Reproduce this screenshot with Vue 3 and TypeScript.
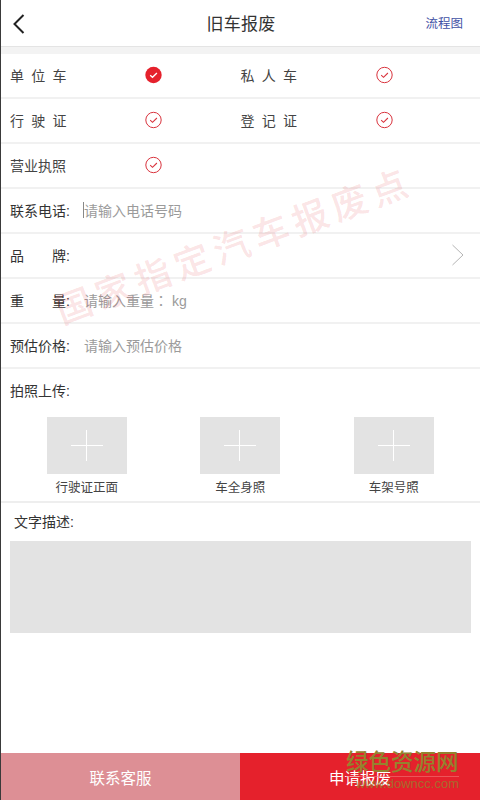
<template>
  <div class="page">
    <header class="top-bar">
      <svg class="back" width="14" height="22" viewBox="0 0 14 22">
        <path d="M11.5 2 L2.5 11 L11.5 20" fill="none" stroke="#222" stroke-width="2" />
      </svg>
      <h1 class="title">旧车报废</h1>
      <span class="flow">流程图</span>
    </header>
    <div class="band"></div>

    <div v-for="(row, i) in checkRows" :key="i" class="row check-row">
      <div v-for="item in row" :key="item.label" class="check-cell">
        <span class="check-label" :class="{ tight: item.label.length > 3 }">{{ item.label }}</span>
        <svg width="18" height="18" viewBox="0 0 18 18">
          <template v-if="item.on">
            <circle cx="8.5" cy="9" r="8.2" fill="#e5212c" />
            <path d="M5.2 9.2 L7.5 11.3 L11.9 7" fill="none" stroke="#fff" stroke-width="1.3" />
          </template>
          <template v-else>
            <circle cx="8.5" cy="9" r="7.7" fill="none" stroke="#d9343e" stroke-width="1" />
            <path d="M5.2 9.2 L7.5 11.3 L11.9 7" fill="none" stroke="#d9343e" stroke-width="1.1" />
          </template>
        </svg>
      </div>
    </div>

    <div class="row field">
      <span class="field-label">联系电话:</span>
      <span class="caret"></span>
      <span class="hint">请输入电话号码</span>
    </div>
    <div class="row field">
      <span class="field-label spread"><i>品</i><i>牌:</i></span>
      <svg class="arrow" width="14" height="26" viewBox="0 0 14 26">
        <path d="M1.5 3 L12 13 L1.5 23" fill="none" stroke="#b5b5b5" stroke-width="1" />
      </svg>
    </div>
    <div class="row field">
      <span class="field-label spread"><i>重</i><i>量:</i></span>
      <span class="hint">请输入重量<span class="hint-colon">：</span> kg</span>
    </div>
    <div class="row field">
      <span class="field-label">预估价格:</span>
      <span class="hint">请输入预估价格</span>
    </div>

    <section class="upload">
      <div class="section-label">拍照上传:</div>
      <div class="photos">
        <div v-for="photo in photos" :key="photo" class="photo">
          <div class="photo-box">
            <span class="plus-h"></span>
            <span class="plus-v"></span>
          </div>
          <span class="photo-name">{{ photo }}</span>
        </div>
      </div>
    </section>

    <section class="describe">
      <div class="section-label desc-label">文字描述:</div>
      <div class="desc-box"></div>
    </section>

    <footer class="actions">
      <button class="btn service">联系客服</button>
      <button class="btn apply">申请报废</button>
    </footer>

    <div class="stamp">国家指定汽车报废点</div>
    <div class="site-mark">
      <div class="site-name">绿色资源网</div>
      <div class="site-url">www.downcc.com</div>
    </div>
  </div>
</template>

<script setup lang="ts">
interface CheckItem {
  label: string;
  on: boolean;
}

const checkRows: CheckItem[][] = [
  [
    { label: "单位车", on: true },
    { label: "私人车", on: false },
  ],
  [
    { label: "行驶证", on: false },
    { label: "登记证", on: false },
  ],
  [{ label: "营业执照", on: false }],
];

const photos = ["行驶证正面", "车全身照", "车架号照"];
</script>

<style>
body {
  margin: 0;
  background: #fff;
}
</style>

<style scoped>
.page {
  position: relative;
  width: 480px;
  height: 800px;
  box-sizing: border-box;
  border-left: 1px solid #3a3a3a;
  display: flex;
  flex-direction: column;
  overflow: hidden;
  background: #fff;
  color: #333;
  font-family: "Liberation Sans", "Noto Sans CJK SC", sans-serif;
  font-size: 14px;
}

.top-bar {
  position: relative;
  height: 46px;
  display: flex;
  align-items: center;
  justify-content: center;
  flex-shrink: 0;
}

.back {
  position: absolute;
  left: 11px;
  top: 13px;
}

.title {
  margin: 0 0 2px 1px;
  font-size: 17px;
  font-weight: 400;
  letter-spacing: 0.3px;
  color: #333;
}

.flow {
  position: absolute;
  right: 17px;
  top: 15px;
  font-size: 12.5px;
  line-height: 18px;
  color: #3f51a5;
}

.band {
  height: 8px;
  flex-shrink: 0;
  box-sizing: border-box;
  border-top: 1px solid #e4e4e4;
  background: #f3f3f3;
}

.row {
  height: 45px;
  box-sizing: border-box;
  border-bottom: 2px solid #f1f1f1;
  flex-shrink: 0;
  display: flex;
  align-items: center;
  padding: 0 0 2px 9px;
}

.check-cell {
  width: 230.5px;
  display: flex;
  align-items: center;
}

.check-label {
  width: 135px;
  flex-shrink: 0;
  letter-spacing: 7.3px;
  color: #444;
}

.check-label.tight {
  letter-spacing: 0;
}

.field-label {
  width: 73px;
  flex-shrink: 0;
  color: #333;
}

.spread {
  display: flex;
  justify-content: space-between;
  width: 60px;
  margin-right: 13px;
}

.spread i {
  font-style: normal;
}

.caret {
  width: 1px;
  height: 16px;
  margin-right: -1px;
  background: #888;
}

.hint {
  color: #9b9b9b;
  margin-left: 1px;
}

.hint-colon {
  font-family: "Noto Sans CJK TC", sans-serif;
}

.arrow {
  margin-left: auto;
  margin-right: 15px;
}

.upload {
  height: 134px;
  box-sizing: border-box;
  flex-shrink: 0;
  border-bottom: 2px solid #eeeeee;
}

.section-label {
  padding: 12px 0 0 9px;
  line-height: 20px;
  color: #333;
}

.photos {
  display: flex;
  margin-top: 16px;
  padding-left: 6px;
}

.photo {
  width: 153.5px;
  display: flex;
  flex-direction: column;
  align-items: center;
  flex-shrink: 0;
}

.photo:first-child {
  margin-left: 3px;
}

.photo-box {
  position: relative;
  width: 80px;
  height: 57px;
  background: #e3e3e3;
}

.plus-h {
  position: absolute;
  left: 24px;
  top: 28px;
  width: 32px;
  height: 1px;
  background: #fff;
}

.plus-v {
  position: absolute;
  left: 39px;
  top: 13px;
  width: 1px;
  height: 31px;
  background: #fff;
}

.photo-name {
  margin-top: 5px;
  font-size: 12.5px;
  line-height: 18px;
  color: #444;
}

.describe {
  flex-shrink: 0;
}

.desc-label {
  padding: 9px 0 0 13px;
}

.desc-box {
  margin: 9px 0 0 9px;
  width: 461px;
  height: 92px;
  background: #e3e3e3;
}

.actions {
  margin-top: auto;
  height: 47px;
  display: flex;
  flex-shrink: 0;
}

.btn {
  border: 0;
  padding: 0;
  font-family: inherit;
  font-size: 15.5px;
  color: #fff;
  background: none;
}

.service {
  width: 239px;
  background: #dd8f95;
}

.apply {
  width: 240px;
  background: #e5212c;
}

.stamp {
  position: absolute;
  left: 45px;
  top: 226px;
  width: 372px;
  transform: rotate(-20.5deg);
  font-size: 36px;
  line-height: 44px;
  letter-spacing: 6px;
  font-weight: 500;
  white-space: nowrap;
  color: rgba(229, 60, 70, 0.15);
  pointer-events: none;
}

.site-mark {
  position: absolute;
  right: 21px;
  bottom: 9px;
  width: 113px;
  pointer-events: none;
  color: #93832e;
}

.site-name {
  font-size: 22.5px;
  line-height: 26px;
  font-weight: 500;
  white-space: nowrap;
  border-bottom: 1px solid rgba(240, 120, 120, 0.6);
}

.site-url {
  font-size: 13px;
  line-height: 14px;
  white-space: nowrap;
  direction: rtl;
  opacity: 0.75;
}
</style>
